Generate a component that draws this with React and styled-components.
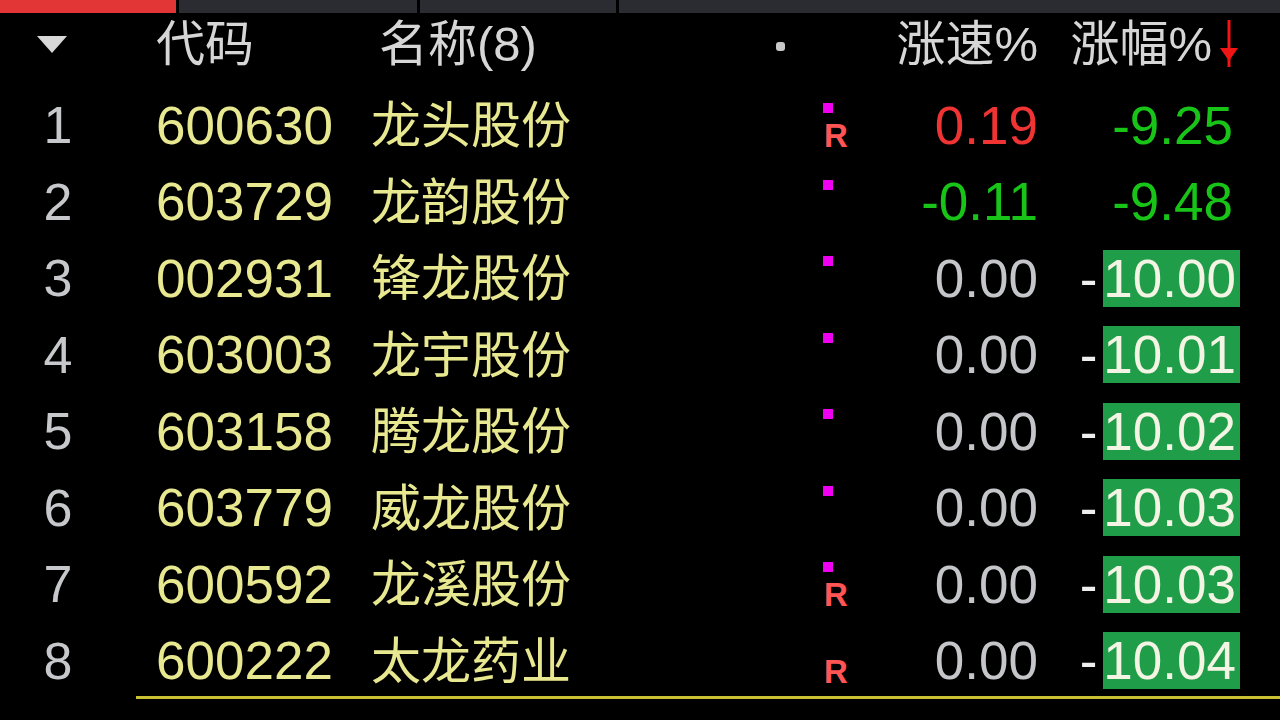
import React from "react";
import styled, { createGlobalStyle } from "styled-components";

const GlobalStyle = createGlobalStyle`
  html, body { margin: 0; padding: 0; background: #000; overflow: hidden; }
  * { box-sizing: border-box; }
`;

const Page = styled.div`
  width: 1280px;
  height: 720px;
  background: #000;
  display: flex;
  flex-direction: column;
  font-family: "Liberation Sans", "Noto Sans CJK SC", sans-serif;
`;

const TabBar = styled.div`
  display: flex;
  height: 13px;
  gap: 3px;
  flex-shrink: 0;
`;

const Tab = styled.div`
  height: 100%;
  width: ${(p) => (p.$w ? `${p.$w}px` : "auto")};
  flex: ${(p) => (p.$w ? "0 0 auto" : "1 1 auto")};
  background: ${(p) => (p.$active ? "#e23535" : "#2b2c31")};
`;

const HeaderRow = styled.div`
  display: flex;
  align-items: center;
  height: 74px;
  padding-bottom: 12px;
  flex-shrink: 0;
  color: #d6d6d6;
  font-size: 49px;
  line-height: 1;
`;

const Row = styled.div`
  display: flex;
  align-items: center;
  height: 76.5px;
  flex-shrink: 0;
`;

const IndexCell = styled.div`
  width: 116px;
  flex-shrink: 0;
  text-align: center;
  font-size: 52px;
  line-height: 1;
  color: #c6c8cc;
`;

const SortCell = styled.div`
  width: 116px;
  flex-shrink: 0;
  display: flex;
  align-items: center;
  padding-left: 37px;
`;

const CodeCell = styled.div`
  width: 215px;
  margin-left: 40px;
  flex-shrink: 0;
  font-size: ${(p) => (p.$header ? "49px" : "53px")};
  line-height: 1;
  color: ${(p) => (p.$header ? "#d6d6d6" : "#e8e890")};
`;

const NameCell = styled.div`
  width: 452px;
  flex-shrink: 0;
  margin-bottom: 8px;
  font-family: "Noto Sans CJK SC", sans-serif;
  font-size: 50px;
  line-height: 1;
  color: #e8e890;
`;

const HeaderNameCell = styled.div`
  width: 452px;
  flex-shrink: 0;
  display: flex;
  align-items: center;
  justify-content: space-between;
  padding: 0 38px 0 8px;
`;

const Dot = styled.span`
  width: 9px;
  height: 9px;
  border-radius: 3px;
  background: #c8c8c8;
  margin-top: 4px;
`;

const MarkerCell = styled.div`
  width: 40px;
  flex-shrink: 0;
  align-self: stretch;
  display: flex;
  flex-direction: column;
  align-items: flex-start;
  padding-top: 16px;
`;

const Square = styled.span`
  width: 10px;
  height: 10px;
  background: #f000f0;
  visibility: ${(p) => (p.$show ? "visible" : "hidden")};
`;

const RMark = styled.span`
  margin-top: 7px;
  margin-left: 1px;
  font-size: 33px;
  font-weight: bold;
  line-height: 32px;
  color: #ff5555;
  visibility: ${(p) => (p.$show ? "visible" : "hidden")};
`;

const SpeedCell = styled.div`
  width: 175px;
  flex-shrink: 0;
  text-align: right;
  font-size: ${(p) => (p.$header ? "49px" : "53px")};
  line-height: 1;
  color: ${(p) => p.$color || "#d6d6d6"};
`;

const ChangeCell = styled.div`
  width: 202px;
  flex-shrink: 0;
  display: flex;
  justify-content: flex-end;
  align-items: center;
  padding-right: ${(p) => (p.$header ? "2px" : "0")};
`;

const HeaderLabel = styled.span`
  margin-right: 8px;
`;

const Dash = styled.span`
  font-size: 53px;
  line-height: 1;
  color: #eeeeee;
  margin-right: 6px;
`;

const Value = styled.span`
  display: inline-block;
  height: 57px;
  line-height: 57px;
  padding: 0 ${(p) => (p.$boxed ? "4px" : "7px")} 0 0;
  font-size: 53px;
  color: ${(p) => (p.$boxed ? "#f4f4e4" : p.$color)};
  background: ${(p) => (p.$boxed ? "#1f9d49" : "transparent")};
`;

const Divider = styled.div`
  margin-left: 136px;
  margin-top: -3px;
  height: 3px;
  background: #c9c132;
`;

const SortIcon = () => (
  <svg width="30" height="17" viewBox="0 0 30 17">
    <polygon points="0,0 30,0 15,17" fill="#d8d8d8" />
  </svg>
);

const ArrowDown = () => (
  <svg width="18" height="48" viewBox="0 0 18 48">
    <rect x="7.5" y="0" width="3" height="47" fill="#f01414" />
    <polygon points="0,28 18,28 9,41" fill="#f01414" />
  </svg>
);

const RED = "#f03434";
const GREEN = "#18c418";
const GRAY = "#c4c6ca";

const rows = [
  { code: "600630", name: "龙头股份", sq: true, r: true, speed: "0.19", sc: RED, chg: "-9.25" },
  { code: "603729", name: "龙韵股份", sq: true, r: false, speed: "-0.11", sc: GREEN, chg: "-9.48" },
  { code: "002931", name: "锋龙股份", sq: true, r: false, speed: "0.00", sc: GRAY, chg: "10.00", box: true },
  { code: "603003", name: "龙宇股份", sq: true, r: false, speed: "0.00", sc: GRAY, chg: "10.01", box: true },
  { code: "603158", name: "腾龙股份", sq: true, r: false, speed: "0.00", sc: GRAY, chg: "10.02", box: true },
  { code: "603779", name: "威龙股份", sq: true, r: false, speed: "0.00", sc: GRAY, chg: "10.03", box: true },
  { code: "600592", name: "龙溪股份", sq: true, r: true, speed: "0.00", sc: GRAY, chg: "10.03", box: true },
  { code: "600222", name: "太龙药业", sq: false, r: true, speed: "0.00", sc: GRAY, chg: "10.04", box: true },
];

export default function App() {
  return (
    <Page>
      <GlobalStyle />
      <TabBar>
        <Tab $active $w={176} />
        <Tab $w={238} />
        <Tab $w={196} />
        <Tab />
      </TabBar>
      <HeaderRow>
        <SortCell>
          <SortIcon />
        </SortCell>
        <CodeCell $header>代码</CodeCell>
        <HeaderNameCell>
          <span>名称(8)</span>
          <Dot />
        </HeaderNameCell>
        <MarkerCell />
        <SpeedCell $header>涨速%</SpeedCell>
        <ChangeCell $header>
          <HeaderLabel>涨幅%</HeaderLabel>
          <ArrowDown />
        </ChangeCell>
      </HeaderRow>
      {rows.map((r, i) => (
        <Row key={r.code}>
          <IndexCell>{i + 1}</IndexCell>
          <CodeCell>{r.code}</CodeCell>
          <NameCell>{r.name}</NameCell>
          <MarkerCell>
            <Square $show={r.sq} />
            <RMark $show={r.r}>R</RMark>
          </MarkerCell>
          <SpeedCell $color={r.sc}>{r.speed}</SpeedCell>
          <ChangeCell>
            {r.box && <Dash>-</Dash>}
            <Value $boxed={r.box} $color={GREEN}>
              {r.chg}
            </Value>
          </ChangeCell>
        </Row>
      ))}
      <Divider />
    </Page>
  );
}
